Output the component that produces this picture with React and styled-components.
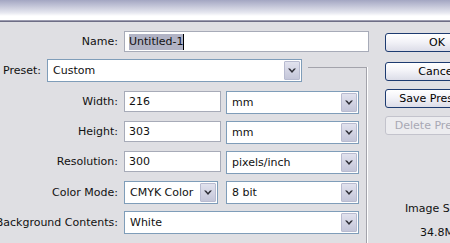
import React from 'react';
import styled, {createGlobalStyle} from 'styled-components';

const GlobalStyle = createGlobalStyle`
  html, body {
    margin: 0;
    padding: 0;
    background: #dfdfe3;
    overflow: hidden;
  }
  body {
    font-family: "DejaVu Sans", Verdana, sans-serif;
    font-size: 11px;
    color: #111;
  }
`;

const Dialog = styled.div`
  width: 450px;
  height: 243px;
  overflow: hidden;
  background: #dfdfe3;
`;

const TitleBar = styled.div`
  height: 20px;
  background: linear-gradient(#a3a6c2 0px, #e8e9f1 13px, #ffffff 16px, #ffffff 19px);
  border-bottom: 1px solid #9c9cb0;
  box-shadow: 0 1px 0 #6e6e86;
`;

const Body = styled.div`
  display: flex;
  align-items: flex-start;
`;

const Form = styled.div`
  width: 367px;
  flex: none;
  display: flex;
  flex-direction: column;
`;

const Row = styled.div`
  display: grid;
  grid-template-columns: 118px auto;
  column-gap: 6px;
  height: 23px;
  align-items: start;
  margin-top: ${p => p.$top || 0}px;
`;

const Label = styled.div`
  display: flex;
  justify-content: flex-end;
  white-space: nowrap;
  line-height: ${p => p.$lh || 21}px;
`;

const Fields = styled.div`
  display: flex;
  gap: ${p => p.$gap || 5}px;
  align-items: flex-start;
`;

const TextBox = styled.div`
  box-sizing: border-box;
  width: ${p => p.$w}px;
  height: 21px;
  border: 1px solid #a7abb8;
  background: #fff;
  padding-left: 4px;
  line-height: 19px;
  white-space: nowrap;
  flex: none;
`;

const Selected = styled.span`
  background: #b1b3c5;
  padding: 1px 0 2px;
  border-right: 1px solid #000;
`;

const SelectBox = styled.div`
  box-sizing: border-box;
  width: ${p => p.$w}px;
  height: 23px;
  border: 1px solid #7f9db9;
  background: #fff;
  display: flex;
  align-items: stretch;
  flex: none;
`;

const SelectText = styled.div`
  flex: 1;
  padding-left: 5px;
  line-height: 21px;
  white-space: nowrap;
  overflow: hidden;
`;

const DropButton = styled.div`
  width: 16px;
  margin: 1px;
  box-sizing: border-box;
  border: 1px solid #b8bbd0;
  border-radius: 1px;
  background: linear-gradient(#e1e2ee, #c4c6d9);
  display: flex;
  align-items: center;
  justify-content: center;
`;

const PresetRow = styled.div`
  display: flex;
  align-items: flex-start;
  height: 23px;
  margin-top: 5px;
`;

const PresetLabel = styled.div`
  width: 47px;
  padding-left: 3px;
  box-sizing: border-box;
  line-height: 23px;
  white-space: nowrap;
`;

const FrameCorner = styled.div`
  flex: 1;
  margin-left: 6px;
  margin-top: 8px;
  height: 15px;
  border-top: 1px solid #a3a3ab;
  border-right: 1px solid #a3a3ab;
  box-shadow: 1px 0 0 #fff;
`;

const Group = styled.div`
  border-right: 1px solid #a3a3ab;
  box-shadow: 1px 0 0 #fff;
  padding-top: 9px;
  height: 200px;
  display: flex;
  flex-direction: column;
  gap: 7px;
`;

const Side = styled.div`
  margin-left: 18px;
  width: 104px;
  flex: none;
  display: flex;
  flex-direction: column;
`;

const Button = styled.div`
  box-sizing: border-box;
  height: 19px;
  margin-top: ${p => p.$top}px;
  border: 1px solid ${p => (p.$disabled ? '#c3c3cc' : '#1d3b70')};
  border-radius: 3px;
  background: ${p => (p.$disabled
    ? '#ececef'
    : 'linear-gradient(#ffffff 0%, #f3f3f8 45%, #dcdde8 100%)')};
  color: ${p => (p.$disabled ? '#a8a8b4' : '#000')};
  text-align: center;
  line-height: 17px;
  white-space: nowrap;
`;

const Info = styled.div`
  text-align: center;
  white-space: nowrap;
  margin-top: ${p => p.$top}px;
`;

const Chevron = () => (
  <svg width="8" height="6" viewBox="0 0 8 6">
    <polygon points="0,0.5 2,0.5 4,2.8 6,0.5 8,0.5 4,5" fill="#2e2e36"/>
  </svg>
);

const Select = ({w, children}) => (
  <SelectBox $w={w}>
    <SelectText>{children}</SelectText>
    <DropButton><Chevron/></DropButton>
  </SelectBox>
);

export default function App() {
  return (
    <Dialog>
      <GlobalStyle/>
      <TitleBar/>
      <Body>
        <Form>
          <Row $top={10}>
            <Label>Name:</Label>
            <TextBox $w={245}><Selected>Untitled-1</Selected></TextBox>
          </Row>
          <PresetRow>
            <PresetLabel>Preset:</PresetLabel>
            <Select w={255}>Custom</Select>
            <FrameCorner/>
          </PresetRow>
          <Group>
            <Row>
              <Label>Width:</Label>
              <Fields>
                <TextBox $w={97}>216</TextBox>
                <Select w={133}>mm</Select>
              </Fields>
            </Row>
            <Row>
              <Label>Height:</Label>
              <Fields>
                <TextBox $w={97}>303</TextBox>
                <Select w={133}>mm</Select>
              </Fields>
            </Row>
            <Row>
              <Label>Resolution:</Label>
              <Fields>
                <TextBox $w={97}>300</TextBox>
                <Select w={133}>pixels/inch</Select>
              </Fields>
            </Row>
            <Row>
              <Label $lh={23}>Color Mode:</Label>
              <Fields $gap={8}>
                <Select w={94}>CMYK Color</Select>
                <Select w={133}>8 bit</Select>
              </Fields>
            </Row>
            <Row>
              <Label $lh={23}>Background Contents:</Label>
              <Fields>
                <Select w={235}>White</Select>
              </Fields>
            </Row>
          </Group>
        </Form>
        <Side>
          <Button $top={12}>OK</Button>
          <Button $top={10}>Cancel</Button>
          <Button $top={8}>Save Preset...</Button>
          <Button $top={8} $disabled>Delete Preset...</Button>
          <Info $top={67}>Image Size:</Info>
          <Info $top={11}>34.8M</Info>
        </Side>
      </Body>
    </Dialog>
  );
}
